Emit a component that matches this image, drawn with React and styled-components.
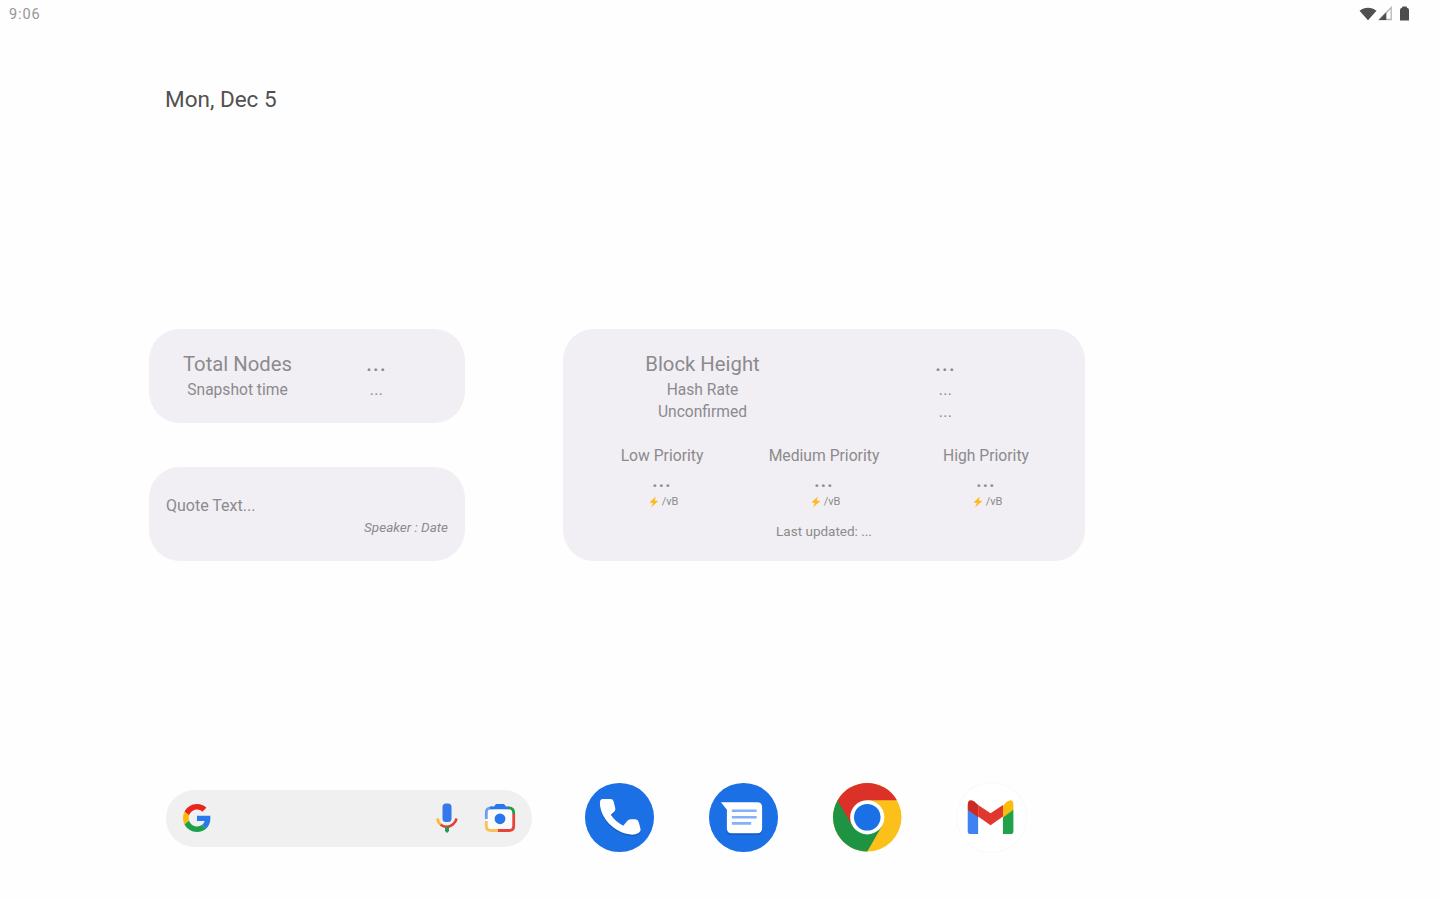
import React from "react";
import styled, { createGlobalStyle } from "styled-components";

const GlobalStyle = createGlobalStyle`
  * { box-sizing: border-box; }
  body { margin: 0; background: #fefefe; font-family: Roboto, "Liberation Sans", sans-serif; }
  svg { display: block; flex: none; }
`;

const Screen = styled.main`
  width: 1440px;
  height: 900px;
  overflow: hidden;
  display: flex;
  flex-direction: column;
  background: #fefefe;
`;

const StatusBar = styled.header`
  height: 28px;
  flex: none;
  display: flex;
  justify-content: space-between;
  align-items: flex-start;
  padding: 0 30px 0 9px;
`;

const Text = styled.span`
  display: block;
  white-space: nowrap;
  font-size: ${(p) => p.$size}px;
  line-height: ${(p) => p.$line}px;
  letter-spacing: ${(p) => p.$track || 0}px;
  font-weight: ${(p) => p.$weight || 400};
  font-style: ${(p) => (p.$italic ? "italic" : "normal")};
  color: ${(p) => p.$color || "#8c8a8e"};
`;

const StatusIcons = styled.div`
  display: flex;
  align-items: center;
  gap: 6px;
  padding-top: 6px;
`;

const Connectivity = styled.div`
  display: flex;
  align-items: center;
  gap: 1.500px;
`;

const DateLine = styled.div`
  flex: none;
  height: 301px;
  padding: 56px 0 0 165px;
`;

const Widgets = styled.section`
  flex: none;
  display: flex;
  gap: 98px;
  padding-left: 149px;
  height: 232px;
`;

const Column = styled.div`
  display: flex;
  flex-direction: column;
  gap: 44px;
`;

const Card = styled.article`
  width: ${(p) => p.$width}px;
  height: ${(p) => p.$height}px;
  padding: ${(p) => p.$pad};
  border-radius: 31px;
  background: #f1eff3;
`;

const Columns = styled.div`
  display: grid;
  grid-template-columns: repeat(${(p) => p.$count}, 1fr);
  justify-items: center;
  margin-top: ${(p) => p.$top || 0}px;
`;

const QuoteCard = styled(Card)`
  display: flex;
  flex-direction: column;
`;

const Speaker = styled.div`
  align-self: flex-end;
`;

const Fee = styled.div`
  display: flex;
  flex-direction: column;
  align-items: center;
`;

const Unit = styled.div`
  display: flex;
  align-items: center;
  gap: 3px;
  padding-left: 3px;
`;

const Updated = styled.footer`
  display: flex;
  justify-content: center;
  margin-top: 13px;
`;

const Dock = styled.nav`
  display: flex;
  align-items: center;
  margin-top: 221px;
  padding-left: 166px;
  height: 71px;
`;

const SearchBar = styled.div`
  width: 366px;
  height: 57px;
  border-radius: 29px;
  background: #f0f0f0;
  display: flex;
  align-items: center;
  padding: 0 16px 0 17px;
  margin: 1px 53px 0 0;
`;

const SearchActions = styled.div`
  margin-left: auto;
  display: flex;
  align-items: center;
  gap: 26px;
`;

const Apps = styled.div`
  display: flex;
  gap: 55.500px;
`;

const AppButton = styled.button`
  width: 68.500px;
  height: 68.500px;
  border: 0;
  padding: 0;
  border-radius: 50%;
  background: ${(p) => p.$bg};
  box-shadow: ${(p) => (p.$ring ? "0 0 2px rgba(0,0,0,0.07)" : "none")};
  display: flex;
  align-items: center;
  justify-content: center;
`;

function Wifi() {
  return (
    <svg width="18" height="14" viewBox="0 0 18 14">
      <path d="M0.500 3.700C5.500 -0.300 12.500 -0.300 17.500 3.700L9 13.200Z" fill="#505050" />
    </svg>
  );
}

function Signal() {
  return (
    <svg width="15" height="15" viewBox="0 0 15 15">
      <path d="M1.500 13.500L13.200 1.500V13.500Z" fill="#fff" stroke="#b5b5b5" strokeWidth="1.300" />
      <path d="M0.800 14L8.300 6.300V14Z" fill="#505050" />
    </svg>
  );
}

function Battery() {
  return (
    <svg width="11" height="15" viewBox="0 0 11 15">
      <path d="M3.500 0.500H7.500L8 1.800Q10 2 10 4V14.500H1V4Q1 2 3 1.800Z" fill="#4c4c4c" />
    </svg>
  );
}

function GoogleG() {
  return (
    <svg width="28" height="28" viewBox="0 0 48 48">
      <path fill="#e8261c" d="M24 9.500c3.540 0 6.710 1.220 9.210 3.600l6.850-6.850C35.900 2.380 30.470 0 24 0 14.620 0 6.510 5.380 2.560 13.220l7.980 6.190C12.430 13.720 17.740 9.500 24 9.500z" />
      <path fill="#2879ee" d="M46.980 24.550c0-1.570-.15-3.090-.38-4.550H24v9.020h12.940c-.58 2.960-2.260 5.480-4.780 7.180l7.730 6c4.510-4.180 7.090-10.360 7.090-17.650z" />
      <path fill="#fcba05" d="M10.530 28.590c-.48-1.450-.76-2.990-.76-4.590s.27-3.140.76-4.590l-7.980-6.190C.92 16.460 0 20.120 0 24c0 3.880.92 7.540 2.560 10.780l7.970-6.190z" />
      <path fill="#1da04b" d="M24 48c6.480 0 11.930-2.130 15.890-5.810l-7.730-6c-2.150 1.450-4.920 2.300-8.160 2.300-6.260 0-11.570-4.220-13.470-9.910l-7.980 6.190C6.510 42.620 14.620 48 24 48z" />
    </svg>
  );
}

function Mic() {
  return (
    <svg width="22" height="30" viewBox="0 0 22 30">
      <rect x="6.500" y="0.500" width="9" height="18.500" rx="3.500" fill="#3478ec" />
      <path d="M1.500 15.500Q2 20 5.500 22.200" fill="none" stroke="#fcb929" strokeWidth="2.600" />
      <path d="M4.700 21.700Q11 26 16.800 21.500Q20 19 20.500 15.500" fill="none" stroke="#e43b32" strokeWidth="2.600" />
      <path d="M9 24H13V28L11 30L9 28Z" fill="#239b4d" />
    </svg>
  );
}

function Lens() {
  return (
    <svg width="32" height="30" viewBox="0 0 32 30">
      <path d="M4 5H28L30 8V27H3V7Z" fill="#fbfbfc" />
      <path d="M2.300 16V9.500Q2.300 4.800 7 4.800H9" fill="none" stroke="#6d9df4" strokeWidth="2.800" />
      <path d="M6 6.300V3.500H10L12 1H20L22 3.500H25V6.300Z" fill="#2878ec" />
      <path d="M24 4.800H25Q29.700 4.800 29.700 10V11" fill="none" stroke="#219b4c" strokeWidth="2.800" />
      <path d="M29.700 11V23Q29.700 27.500 25 27.500H14" fill="none" stroke="#e6443a" strokeWidth="2.800" />
      <path d="M2.300 18V23Q2.300 27.500 7 27.500H14" fill="none" stroke="#fbc154" strokeWidth="2.800" />
      <circle cx="16" cy="15.800" r="5.400" fill="#2878ec" />
    </svg>
  );
}

function Phone() {
  const handset =
    "M18 16H25.500Q28.300 16 28.800 18.500L30.500 25.500Q31 27.500 29.500 29L26 32Q30.500 39 38.500 43L42.500 38.300Q44 36.300 46.500 36.500H50.500Q53.500 36.700 54.200 39.500L56 46.500Q56.500 49 54 50.300Q50.500 52.500 46 52C29 50 15 35 15 20Q15 16 18 16Z";
  return (
    <svg width="68.500" height="68.500" viewBox="0 0 69 69">
      <path d={handset} transform="translate(0 1.500)" fill="#0c4fb3" opacity="0.600" />
      <path d={handset} fill="#fff" />
    </svg>
  );
}

function Messages() {
  return (
    <svg width="68.500" height="68.500" viewBox="0 0 69 69">
      <path d="M13 21H48.500Q53.500 21 53.500 26V47.500Q53.500 52.500 48.500 52.500H22.500Q18 52.500 18 47.500V27Z" fill="#0c4fb3" opacity="0.600" />
      <path d="M12 19.500H48.500Q53.500 19.500 53.500 24.500V45.500Q53.500 50.500 48.500 50.500H22.500Q18 50.500 18 45.500V27Z" fill="#fff" />
      <path d="M23 28H48M23 34.500H48M23 40.700H42.500" stroke="#85b1f6" strokeWidth="2.600" />
    </svg>
  );
}

function Chrome() {
  return (
    <svg width="68.500" height="68.500" viewBox="0 0 48 48">
      <circle cx="24" cy="24" r="24" fill="#fbc11a" />
      <path d="M3.220 12A24 24 0 0 0 24 48L34.390 30L24 24Z" fill="#1e9341" />
      <path d="M3.220 12A24 24 0 0 1 44.780 12H24L13.610 30Z" fill="#db3128" />
      <path d="M3.220 12L13.610 30L24 24V12Z" fill="#db3128" />
      <circle cx="24" cy="24" r="12" fill="#fff" />
      <circle cx="24" cy="24" r="9.300" fill="#1a70e6" />
    </svg>
  );
}

function Gmail() {
  return (
    <svg width="68.500" height="68.500" viewBox="0 0 69 69">
      <g transform="translate(10.800 16.700) scale(1 0.980)">
        <path d="M0 10L10.500 18V35.500H3Q0 35.500 0 32.500Z" fill="#3f83f3" />
        <path d="M46 10L35.500 18V35.500H43Q46 35.500 46 32.500Z" fill="#21a14a" />
        <path d="M35.500 6.500L39 2.500Q46 -2 46 5.500V10.500L35.500 18.500Z" fill="#fbbb0a" />
        <path d="M10.500 5.500L23 14L35.500 5.500V17.500L23 26.500L10.500 17.500Z" fill="#e0382c" />
        <path d="M0 5.500Q0 -2 7 2.200L10.500 5.500V18.500L0 10.500Z" fill="#cb2b23" />
      </g>
    </svg>
  );
}

function Bolt() {
  return (
    <svg width="10" height="12" viewBox="0 0 10 12">
      <path d="M6.800 0.500L0.500 6.600L4 7L2 11.500L9.300 5L5.700 4.500Z" fill="#fdb91e" />
    </svg>
  );
}

function Metric({ label, main, line }) {
  return (
    <Columns $count={2}>
      <Text $size={main ? 20.3 : 15.6} $line={line}>{label}</Text>
      <Text $size={main ? 20.3 : 15.6} $line={line} $track={main ? 1.2 : 0.4} $weight={main ? 500 : 400}>...</Text>
    </Columns>
  );
}

function Priority({ label }) {
  return (
    <Fee>
      <Text $size={15.7} $line={22}>{label}</Text>
      <Text $size={18} $line={28} $track={1.2} $weight={700}>...</Text>
      <Unit>
        <Bolt />
        <Text $size={11} $line={14}>/vB</Text>
      </Unit>
    </Fee>
  );
}

export default function App() {
  return (
    <>
      <GlobalStyle />
      <Screen>
        <StatusBar>
          <Text $size={14.5} $line={30} $color="#969696" $track={0.9}>9:06</Text>
          <StatusIcons>
            <Connectivity>
              <Wifi />
              <Signal />
            </Connectivity>
            <Battery />
          </StatusIcons>
        </StatusBar>
        <DateLine>
          <Text $size={22.5} $line={30} $color="#515151">Mon, Dec 5</Text>
        </DateLine>
        <Widgets>
          <Column>
            <Card $width={316} $height={94} $pad="21px 19px">
              <Metric label="Total Nodes" main line={28} />
              <Metric label="Snapshot time" line={24} />
            </Card>
            <QuoteCard $width={316} $height={94} $pad="28px 17px">
              <Text $size={16} $line={22}>Quote Text...</Text>
              <Speaker>
                <Text $size={13.5} $line={20} $italic>Speaker : Date</Text>
              </Speaker>
            </QuoteCard>
          </Column>
          <Card $width={522} $height={232} $pad="21px 18px">
            <Metric label="Block Height" main line={28} />
            <Metric label="Hash Rate" line={24} />
            <Metric label="Unconfirmed" line={21} />
            <Columns $count={3} $top={22}>
              <Priority label="Low Priority" />
              <Priority label="Medium Priority" />
              <Priority label="High Priority" />
            </Columns>
            <Updated>
              <Text $size={13.5} $line={18}>Last updated: ...</Text>
            </Updated>
          </Card>
        </Widgets>
        <Dock>
          <SearchBar>
            <GoogleG />
            <SearchActions>
              <Mic />
              <Lens />
            </SearchActions>
          </SearchBar>
          <Apps>
            <AppButton $bg="#1a70e4" aria-label="Phone"><Phone /></AppButton>
            <AppButton $bg="#1a70e4" aria-label="Messages"><Messages /></AppButton>
            <AppButton $bg="#fff" aria-label="Chrome"><Chrome /></AppButton>
            <AppButton $bg="#fff" $ring aria-label="Gmail"><Gmail /></AppButton>
          </Apps>
        </Dock>
      </Screen>
    </>
  );
}
